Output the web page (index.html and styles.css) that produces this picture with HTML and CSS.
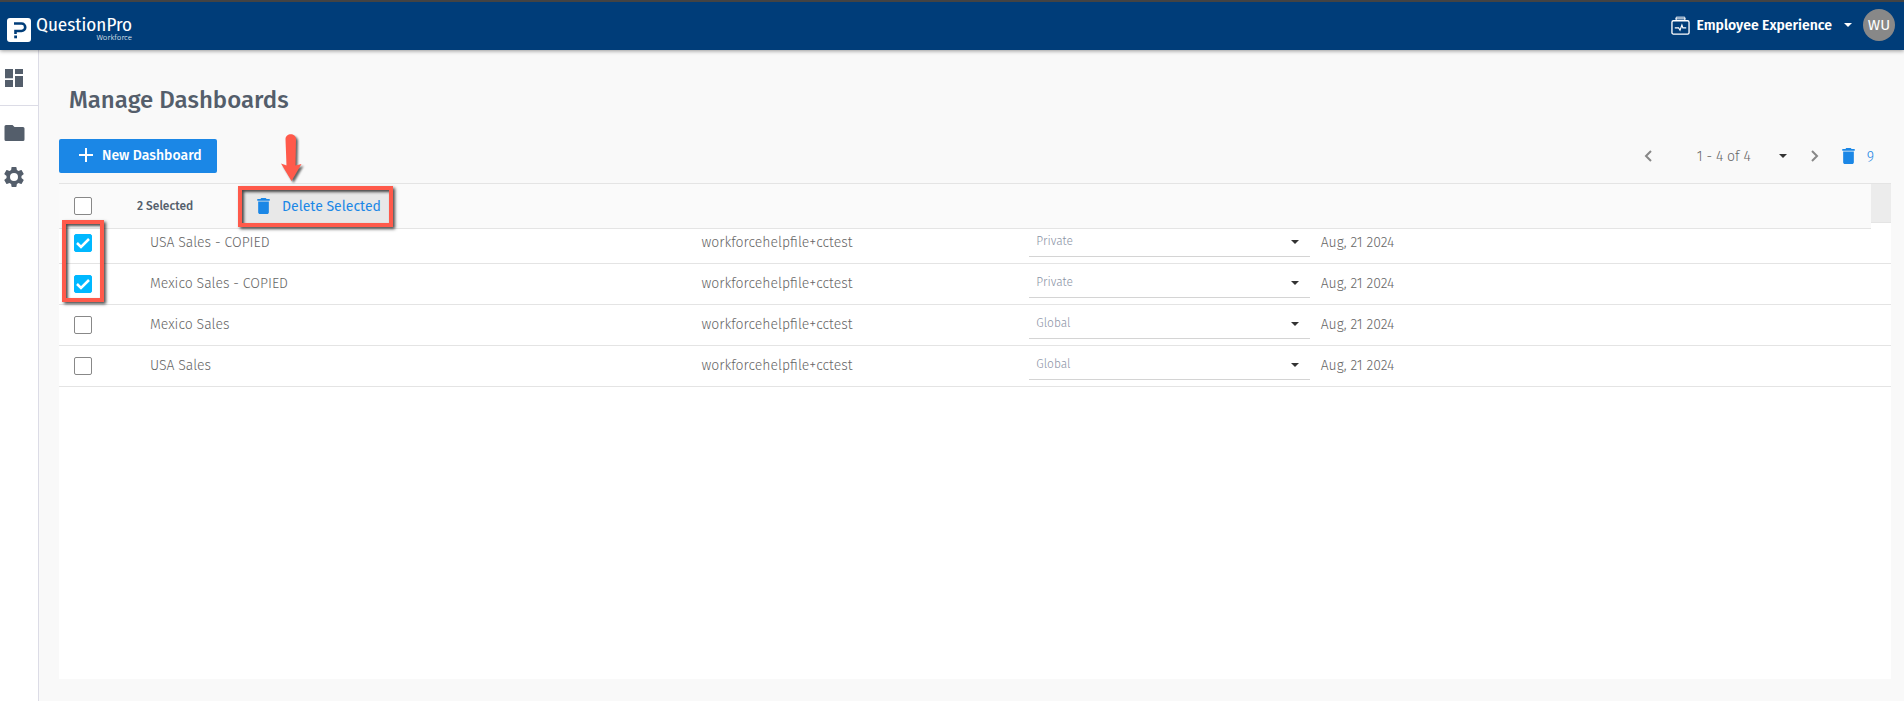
FILE: index.html
```
<!DOCTYPE html>
<html lang="en">
<head>
  <meta charset="utf-8">
  <meta name="viewport" content="width=device-width, initial-scale=1.0">
  <title>Manage Dashboards</title>
  <link rel="stylesheet" href="styles.css">
</head>
<body>

<header class="topbar">
  <a class="brand" href="#">
    <svg class="brand_mark" viewBox="0 0 24 24">
      <rect width="24" height="24" rx="3" fill="#fff"/>
      <path d="M7 5.500h7.500a3.500 3.500 0 0 1 0 7.500H8.500v3" fill="none" stroke="#003d79" stroke-width="2.600"/>
      <rect x="7.200" y="17.500" width="2.800" height="2.800" fill="#003d79"/>
    </svg>
    <span class="brand_text">
      <span class="brand_name">QuestionPro</span>
      <span class="brand_sub">Workforce</span>
    </span>
  </a>
  <div class="account">
    <button class="product" type="button">
      <svg class="product_icon" viewBox="0 0 20 20" fill="none" stroke="#fff">
        <rect x="1" y="5" width="18" height="14" rx="1.500" stroke-width="1.400"/>
        <path d="M4.500 3h11M5.500 4.500V1.200h9v3.300" stroke-width="1"/>
        <path d="M4 12.500h4l1.500 2.500 2-5.500 1 3H16" stroke-width="1.200"/>
      </svg>
      <span>Employee Experience</span>
      <svg class="caret" viewBox="0 0 8 4"><path d="M0 0h8L4 4z" fill="#fff"/></svg>
    </button>
    <button class="avatar" type="button">WU</button>
  </div>
</header>

<div class="layout">
  <nav class="sidebar">
    <a class="side_link side_first" href="#" aria-label="Dashboards">
      <svg class="side_icon" viewBox="3 3 18 18"><path d="M3 12.200h8V3H3zM3 21h8v-7H3zM13 21h8V10h-8zM13 3v5h8V3z"/></svg>
    </a>
    <a class="side_link" href="#" aria-label="Folders">
      <svg class="side_folder" viewBox="2 4 20 16"><path d="M10 4H3.500A1.500 1.500 0 0 0 2 5.500V18.500A1.500 1.500 0 0 0 3.500 20h17a1.500 1.500 0 0 0 1.500-1.500v-11A1.500 1.500 0 0 0 20.500 6H12z"/></svg>
    </a>
    <a class="side_link" href="#" aria-label="Settings">
      <svg class="side_gear" viewBox="2 2 20 20"><path d="M19.430 12.980c.040-.320.070-.640.070-.980s-.030-.660-.070-.980l2.110-1.650c.190-.150.240-.420.120-.640l-2-3.460c-.120-.220-.390-.300-.610-.220l-2.490 1c-.520-.400-1.080-.730-1.690-.980l-.380-2.650A.490.490 0 0 0 14 2h-4c-.250 0-.460.180-.490.420l-.380 2.650c-.610.250-1.170.590-1.690.980l-2.490-1c-.230-.090-.490 0-.610.220l-2 3.460c-.130.220-.070.490.120.640l2.110 1.650c-.040.320-.070.650-.070.980s.030.660.070.980l-2.110 1.650c-.190.150-.240.420-.120.640l2 3.460c.120.220.390.300.610.220l2.490-1c.520.400 1.080.730 1.690.980l.380 2.650c.030.240.240.420.490.420h4c.250 0 .460-.180.490-.420l.380-2.650c.610-.250 1.170-.590 1.690-.980l2.490 1c.230.090.490 0 .610-.220l2-3.460c.120-.220.070-.490-.120-.640zM12 16a4 4 0 1 1 0-8 4 4 0 0 1 0 8z"/></svg>
    </a>
  </nav>

  <main class="content">
    <h1 class="title">Manage Dashboards</h1>

    <div class="toolbar">
      <button class="new_button" type="button">
        <svg class="plus" viewBox="0 0 14 14"><path d="M7 0v14M0 7h14" stroke="#fff" stroke-width="2"/></svg>
        <span>New Dashboard</span>
      </button>
      <div class="pager">
        <button class="page_button" type="button" aria-label="Previous page">
          <svg class="chevron" viewBox="0 0 8 12"><path d="M7 1L2 6l5 5" fill="none" stroke="#888" stroke-width="2"/></svg>
        </button>
        <select class="page_select" aria-label="Page">
          <option>1 - 4 of 4</option>
        </select>
        <button class="page_button" type="button" aria-label="Next page">
          <svg class="chevron" viewBox="0 0 8 12"><path d="M1 1l5 5-5 5" fill="none" stroke="#888" stroke-width="2"/></svg>
        </button>
        <button class="trash_button" type="button">
          <svg class="trash" viewBox="5 3 14 18"><path d="M6 19c0 1.100.900 2 2 2h8c1.100 0 2-.900 2-2V7H6zM19 4h-3.500l-1-1h-5l-1 1H5v2h14z"/></svg>
          <span>9</span>
        </button>
      </div>
    </div>

    <section class="panel">
      <div class="select_bar">
        <input class="check" type="checkbox" aria-label="Select all">
        <span class="selected_count">2 Selected</span>
        <div class="delete_wrap">
          <button class="delete_button" type="button">
            <svg class="trash" viewBox="5 3 14 18"><path d="M6 19c0 1.100.900 2 2 2h8c1.100 0 2-.900 2-2V7H6zM19 4h-3.500l-1-1h-5l-1 1H5v2h14z"/></svg>
            <span>Delete Selected</span>
          </button>
          <svg class="arrow" viewBox="0 0 21 48"><path d="M4.500 5C4.500-1.500 15-1.500 15 5l-.5 26.500 6-1.500L10.500 47 0 29.500l5.500 2z" fill="#ff5a4b"/></svg>
        </div>
      </div>

      <table class="dashboards">
        <colgroup>
          <col class="col_check">
          <col class="col_name">
          <col class="col_owner">
          <col class="col_access">
          <col class="col_date">
        </colgroup>
        <thead>
          <tr><th colspan="5"></th></tr>
        </thead>
        <tbody>
          <tr>
            <td><input class="check" type="checkbox" aria-label="USA Sales - COPIED" checked></td>
            <td>USA Sales - COPIED</td>
            <td>workforcehelpfile+cctest</td>
            <td><select class="access" aria-label="Access"><option>Private</option><option>Global</option></select></td>
            <td>Aug, 21 2024</td>
          </tr>
          <tr>
            <td><input class="check" type="checkbox" aria-label="Mexico Sales - COPIED" checked></td>
            <td>Mexico Sales - COPIED</td>
            <td>workforcehelpfile+cctest</td>
            <td><select class="access" aria-label="Access"><option>Private</option><option>Global</option></select></td>
            <td>Aug, 21 2024</td>
          </tr>
          <tr>
            <td><input class="check" type="checkbox" aria-label="Mexico Sales"></td>
            <td>Mexico Sales</td>
            <td>workforcehelpfile+cctest</td>
            <td><select class="access" aria-label="Access"><option>Global</option><option>Private</option></select></td>
            <td>Aug, 21 2024</td>
          </tr>
          <tr>
            <td><input class="check" type="checkbox" aria-label="USA Sales"></td>
            <td>USA Sales</td>
            <td>workforcehelpfile+cctest</td>
            <td><select class="access" aria-label="Access"><option>Global</option><option>Private</option></select></td>
            <td>Aug, 21 2024</td>
          </tr>
        </tbody>
      </table>
      <div class="callout callout_rows"></div>
    </section>
  </main>
</div>

</body>
</html>
```
FILE: styles.css
```
* {
  box-sizing: border-box;
}

body {
  margin: 0;
  min-height: 100vh;
  display: flex;
  flex-direction: column;
  background-color: #f9f9f9;
  color: #666;
  font-family: "Fira Sans", Roboto, "Noto Sans", sans-serif;
  font-size: 14px;
  font-weight: 300;
}

button, select {
  border: none;
  background-color: transparent;
  padding: 0;
  font: inherit;
  color: inherit;
}

svg {
  display: block;
  flex: none;
}

/* header */

.topbar {
  display: flex;
  justify-content: space-between;
  height: 50px;
  padding: 0 9px 0 7px;
  border-top: 2px solid #434343;
  background-color: #003d79;
  color: #fff;
  box-shadow: 0 1px 4px rgba(0, 0, 0, 0.4);
  z-index: 1;
}

.brand {
  display: flex;
  align-items: flex-end;
  gap: 5px;
  padding-bottom: 8px;
  color: #fff;
  text-decoration: none;
}

.brand_mark {
  width: 24px;
  height: 24px;
}

.brand_text {
  display: flex;
  flex-direction: column;
}

.brand_name {
  font-family: "Fira Sans Condensed", "Fira Sans", Roboto, sans-serif;
  font-size: 19px;
  font-weight: 400;
  line-height: 19px;
}

.brand_sub {
  font-size: 8px;
  line-height: 8px;
  text-align: right;
}

.account {
  display: flex;
  align-items: center;
  gap: 11px;
  padding-bottom: 2px;
}

.product {
  display: flex;
  align-items: center;
  gap: 6px;
  font-weight: 600;
}

.product_icon {
  width: 19px;
  height: 19px;
}

.product .caret {
  width: 8px;
  height: 4px;
  margin-left: 6px;
}

.avatar {
  width: 32px;
  height: 32px;
  border-radius: 50%;
  background-color: #888;
  font-size: 15px;
  font-weight: 400;
}

/* sidebar */

.layout {
  flex: 1;
  display: flex;
}

.sidebar {
  width: 39px;
  border-right: 1px solid #dcdce6;
  background-color: #fff;
}

.side_link {
  display: flex;
  align-items: center;
  height: 44px;
  padding-left: 4px;
  fill: #545e6b;
}

.side_first {
  height: 56px;
  padding-left: 5px;
  border-bottom: 1px solid #dcdce6;
  margin-bottom: 5px;
}

.side_icon {
  width: 18px;
  height: 18px;
}

.side_folder {
  width: 21px;
  height: 16px;
}

.side_gear {
  width: 20px;
  height: 20px;
}

/* content */

.content {
  flex: 1;
  display: flex;
  flex-direction: column;
  padding: 33px 13px 22px 20px;
}

.title {
  margin: 0 0 22px;
  padding-left: 10px;
  color: #545e6b;
  font-size: 24px;
  font-weight: 500;
  line-height: 34px;
}

.toolbar {
  display: flex;
  align-items: center;
  justify-content: space-between;
  margin-bottom: 10px;
}

.new_button {
  display: flex;
  align-items: center;
  gap: 9px;
  height: 34px;
  padding: 0 15px 2px 20px;
  border-radius: 2px;
  background-color: #1b87e6;
  color: #fff;
  font-weight: 500;
}

.plus {
  width: 14px;
  height: 14px;
}

.pager {
  display: flex;
  align-items: center;
  padding-right: 17px;
}

.chevron {
  width: 8px;
  height: 12px;
}

.page_select {
  appearance: none;
  width: 90px;
  margin: 0 24px 0 45px;
  background: url("data:image/svg+xml,%3Csvg xmlns='http://www.w3.org/2000/svg' viewBox='0 0 8 4'%3E%3Cpath d='M0 0h8L4 4z' fill='%23333'/%3E%3C/svg%3E") no-repeat right center / 8px 4px;
}

.trash_button {
  display: flex;
  align-items: center;
  gap: 12px;
  margin-left: 23px;
  color: #1b87e6;
}

.trash {
  width: 13px;
  height: 16px;
  fill: #1b87e6;
}

/* table */

.panel {
  position: relative;
  flex: 1;
  background-color: #fff;
}

/* covers the table head while rows are selected */
.select_bar {
  position: absolute;
  top: 0;
  left: 0;
  right: 20px;
  display: flex;
  align-items: center;
  height: 46px;
  padding-left: 15px;
  border-top: 1px solid #e4e4e4;
  border-bottom: 1px solid #e4e4e4;
  background-color: #fafafa;
}

.selected_count {
  width: 101px;
  margin-left: 45px;
  color: #545e6b;
  font-size: 12px;
  font-weight: 500;
}

.check {
  appearance: none;
  display: block;
  width: 18px;
  height: 18px;
  margin: 0;
  border: 1px solid #888;
  border-radius: 2px;
  background-color: #fff;
}

.check:checked {
  border-color: #00b8ff;
  background: #00b8ff url("data:image/svg+xml,%3Csvg xmlns='http://www.w3.org/2000/svg' viewBox='0 0 16 16'%3E%3Cpath d='M2 8l4 4 8-8' fill='none' stroke='%23fff' stroke-width='2.500'/%3E%3C/svg%3E") no-repeat center / 16px 16px;
}

.delete_wrap {
  position: relative;
  margin-top: 1px;
  border: 4px solid #ff5a4b;
  box-shadow: 2px 2px 3px rgba(0, 0, 0, 0.7), inset 2px 2px 3px rgba(0, 0, 0, 0.7);
  background-color: #e8e8e8;
}

.delete_button {
  display: flex;
  align-items: center;
  gap: 12px;
  height: 33px;
  padding: 0 8px 1px 15px;
  color: #1b87e6;
  font-weight: 400;
}

.arrow {
  position: absolute;
  left: 39px;
  top: -56px;
  width: 21px;
  height: 48px;
  filter: drop-shadow(2px 2px 1px rgba(0, 0, 0, 0.6));
}

.callout {
  position: absolute;
  border: 4px solid #ff5a4b;
  box-shadow: 2px 2px 3px rgba(0, 0, 0, 0.7), inset 2px 2px 3px rgba(0, 0, 0, 0.7);
  pointer-events: none;
}

.callout_rows {
  left: 3px;
  top: 37px;
  width: 42px;
  height: 82px;
}

.dashboards {
  width: 100%;
  table-layout: fixed;
  border-collapse: separate;
  border-spacing: 0;
}

.col_check {
  width: 91px;
}

.col_name {
  width: 30.1%;
}

.col_owner {
  width: 17.9%;
}

.col_access {
  width: 15.9%;
}

.dashboards th {
  height: 40px;
  padding: 0;
  border-top: 1px solid #e4e4e4;
  border-bottom: 1px solid #e4e4e4;
  background-color: #ececec;
}

.dashboards td {
  height: 41px;
  padding: 0 0 2px;
  border-bottom: 1px solid #e4e4e4;
}

.dashboards td:first-child {
  padding: 0 0 0 15px;
}

.access {
  appearance: none;
  display: block;
  width: calc(100% - 11px);
  height: 30px;
  padding: 0 7px 1px;
  border-bottom: 1px solid #d4d4d4;
  background: url("data:image/svg+xml,%3Csvg xmlns='http://www.w3.org/2000/svg' viewBox='0 0 8 4'%3E%3Cpath d='M0 0h8L4 4z' fill='%23333'/%3E%3C/svg%3E") no-repeat right 11px center / 8px 4px;
  color: #8a93a5;
  font-size: 12px;
}
```
